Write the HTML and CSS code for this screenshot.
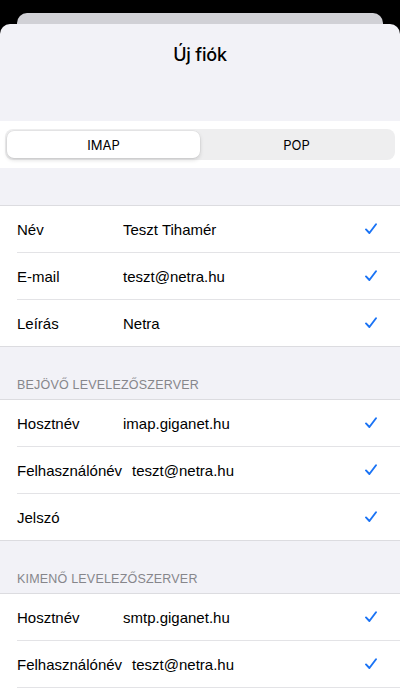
FILE: index.html
```html
<!DOCTYPE html>
<html lang="hu">
<head>
<meta charset="utf-8">
<title>Új fiók</title>
<link rel="stylesheet" href="styles.css">
</head>
<body>
<div class="back-card"></div>
<main class="sheet">
  <header class="title-bar"><h1 class="title">Új fiók</h1></header>
  <div class="seg-band">
    <div class="segmented">
      <div class="seg seg-active">IMAP</div>
      <div class="seg">POP</div>
    </div>
  </div>
  <div class="spacer"></div>
  <section class="group">
    <div class="row"><span class="label">Név</span><span class="value">Teszt Tihamér</span><svg class="check" viewBox="0 0 12 12"><path d="M1 6.4 L4.4 10 L11 1.2"/></svg></div>
    <div class="row"><span class="label">E-mail</span><span class="value">teszt@netra.hu</span><svg class="check" viewBox="0 0 12 12"><path d="M1 6.4 L4.4 10 L11 1.2"/></svg></div>
    <div class="row"><span class="label">Leírás</span><span class="value">Netra</span><svg class="check" viewBox="0 0 12 12"><path d="M1 6.4 L4.4 10 L11 1.2"/></svg></div>
  </section>
  <h2 class="section-header">BEJÖVŐ LEVELEZŐSZERVER</h2>
  <section class="group">
    <div class="row"><span class="label">Hosztnév</span><span class="value">imap.giganet.hu</span><svg class="check" viewBox="0 0 12 12"><path d="M1 6.4 L4.4 10 L11 1.2"/></svg></div>
    <div class="row"><span class="label">Felhasználónév</span><span class="value">teszt@netra.hu</span><svg class="check" viewBox="0 0 12 12"><path d="M1 6.4 L4.4 10 L11 1.2"/></svg></div>
    <div class="row"><span class="label">Jelszó</span><span class="value"></span><svg class="check" viewBox="0 0 12 12"><path d="M1 6.4 L4.4 10 L11 1.2"/></svg></div>
  </section>
  <h2 class="section-header">KIMENŐ LEVELEZŐSZERVER</h2>
  <section class="group">
    <div class="row"><span class="label">Hosztnév</span><span class="value">smtp.giganet.hu</span><svg class="check" viewBox="0 0 12 12"><path d="M1 6.4 L4.4 10 L11 1.2"/></svg></div>
    <div class="row"><span class="label">Felhasználónév</span><span class="value">teszt@netra.hu</span><svg class="check" viewBox="0 0 12 12"><path d="M1 6.4 L4.4 10 L11 1.2"/></svg></div>
    <div class="row row-empty"></div>
  </section>
</main>
</body>
</html>
```
FILE: styles.css
```css
html, body {
  margin: 0;
  padding: 0;
  background: #000;
  height: 693px;
  overflow: hidden;
}
body {
  font-family: "Liberation Sans", Arial, sans-serif;
  color: #000;
  -webkit-font-smoothing: antialiased;
}
.back-card {
  margin: 13px 17px 0;
  height: 11px;
  background: #d1d1d6;
  border-radius: 10px 10px 0 0;
}
.sheet {
  background: #f2f2f7;
  border-radius: 10px 10px 0 0;
  min-height: 669px;
}
.title-bar {
  height: 97px;
  padding-top: 20px;
  box-sizing: border-box;
}
.title {
  margin: 0;
  text-align: center;
  font-size: 18px;
  font-weight: 500;
  line-height: 22px;
  font-family: "Inter", "Liberation Sans", sans-serif;
  letter-spacing: -0.2px;
}
.seg-band {
  background: #fff;
  height: 47px;
  padding: 8px 5px 0 5px;
  box-sizing: border-box;
}
.segmented {
  display: flex;
  height: 31px;
  background: #eeeeef;
  border-radius: 8px;
  padding: 2px;
  box-sizing: border-box;
}
.seg {
  flex: 1;
  display: flex;
  align-items: center;
  justify-content: center;
  font-size: 13px;
  font-weight: 400;
  font-family: "Inter", "Liberation Sans", sans-serif;
  border-radius: 7px;
}
.seg-active {
  background: #fff;
  box-shadow: 0 0 0 0.5px rgba(0,0,0,0.06), 0 2px 4px rgba(0,0,0,0.14);
}
.spacer {
  height: 37px;
}
.group {
  background: #fff;
  border-top: 1px solid #dcdce0;
  border-bottom: 1px solid #dcdce0;
}
.row {
  display: flex;
  align-items: center;
  height: 46px;
  margin-left: 17px;
  padding-right: 23px;
  border-bottom: 1px solid #e3e3e6;
  font-size: 15px;
}
.row:last-child {
  border-bottom: none;
  height: 46px;
}
.label {
  min-width: 96px;
  margin-right: 10px;
  white-space: nowrap;
}
.value {
  flex: 1;
}
.check {
  width: 12px;
  height: 12px;
  fill: none;
  stroke: #1a73f5;
  stroke-width: 1.9;
  stroke-linecap: round;
  stroke-linejoin: round;
}
.section-header {
  margin: 0;
  height: 52px;
  padding: 0 17px 7px;
  box-sizing: border-box;
  display: flex;
  align-items: flex-end;
  font-size: 12.5px;
  font-weight: 400;
  color: #86868b;
  letter-spacing: 0.2px;
}
```
